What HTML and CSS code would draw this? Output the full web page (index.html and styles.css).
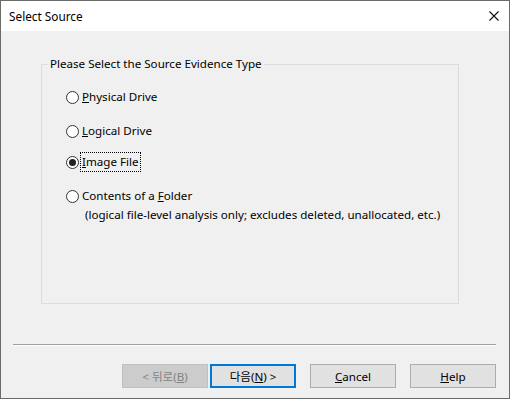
FILE: index.html
```html
<!DOCTYPE html>
<html>
<head>
<meta charset="utf-8">
<link rel="stylesheet" href="styles.css">
</head>
<body>
<div class="window">
  <div class="titlebar">
    <span class="title">Select Source</span>
    <svg class="close" width="10" height="10" viewBox="0 0 10 10"><path d="M0.5 0.5L9.5 9.5M9.5 0.5L0.5 9.5" stroke="#111" stroke-width="1.1" fill="none"/></svg>
  </div>
  <div class="content">
    <fieldset class="group">
      <legend class="legend">Please Select the Source Evidence Type</legend>
      <div class="opt opt-physical"><span class="radio"></span><span class="label"><u>P</u>hysical Drive</span></div>
      <div class="opt opt-logical"><span class="radio"></span><span class="label"><u>L</u>ogical Drive</span></div>
      <div class="opt opt-image"><span class="radio checked"></span><span class="label focus"><u>I</u>mage File</span></div>
      <div class="opt opt-folder"><span class="radio"></span><span class="label">Contents of a <u>F</u>older</span></div>
      <div class="note">(logical file-level analysis only; excludes deleted, unallocated, etc.)</div>
    </fieldset>
    <div class="separator"></div>
    <div class="buttons">
      <div class="btn disabled">&lt; 뒤로(<u>B</u>)</div>
      <div class="btn default">다음(<u>N</u>) &gt;</div>
      <div class="btn spaced"><u>C</u>ancel</div>
      <div class="btn spaced"><u>H</u>elp</div>
    </div>
  </div>
</div>
</body>
</html>
```
FILE: styles.css
```css
html, body {
  margin: 0;
  padding: 0;
  background: #f0f0f0;
}
body {
  font-family: "Noto Sans", "Noto Sans CJK KR", sans-serif;
  font-size: 11.6px;
  color: #000;
}
.window {
  width: 510px;
  height: 399px;
  box-sizing: border-box;
  border: 1px solid #6b6b6b;
  background: #f0f0f0;
  display: flex;
  flex-direction: column;
}
.titlebar {
  height: 30px;
  background: #fff;
  display: flex;
  align-items: center;
  padding-left: 8px;
  padding-right: 10px;
  flex: none;
}
.title {
  font-size: 11.8px;
  flex: 1;
  line-height: 30px;
}
.close {
  display: block;
}
.content {
  flex: 1;
  display: flex;
  flex-direction: column;
  padding: 0 13px 0 12px;
}
.group {
  margin: 25px 37px 0 28px;
  padding: 0 0 0 24px;
  height: 248px;
  box-sizing: border-box;
  border: 1px solid #dcdcdc;
  min-width: 0;
}
.legend {
  padding: 0 2px;
  margin-left: -18px;
  line-height: 16px;
}
.opt {
  display: flex;
  align-items: center;
  height: 20px;
}
.opt-physical { margin-top: 15px; }
.opt-logical { margin-top: 14px; }
.opt-image { margin-top: 11px; }
.opt-folder { margin-top: 14px; }
.radio {
  width: 11px;
  height: 11px;
  border: 1px solid #333;
  border-radius: 50%;
  background: #fff;
  box-sizing: content-box;
  position: relative;
  flex: none;
  margin-right: 1px;
}
.radio.checked::after {
  content: "";
  position: absolute;
  left: 2px;
  top: 2px;
  width: 7px;
  height: 7px;
  border-radius: 50%;
  background: #222;
}
.label {
  padding: 0 1px;
  line-height: 18px;
  border: 1px dotted transparent;
}
.label.focus {
  border-color: #000;
}
.note {
  margin-left: 19px;
  line-height: 18px;
  margin-top: 0;
}
.separator {
  margin-top: 40px;
  height: 1px;
  background: #a0a0a0;
  border-bottom: 1px solid #fff;
}
.buttons {
  display: flex;
  justify-content: flex-end;
  margin-top: 18px;
}
.btn {
  width: 86px;
  height: 24px;
  box-sizing: border-box;
  border: 1px solid #adadad;
  background: #e1e1e1;
  display: flex;
  align-items: center;
  justify-content: center;
  margin-left: 2px;
}
.btn.spaced {
  margin-left: 14px;
}
.btn.disabled {
  background: #cccccc;
  border-color: #bfbfbf;
  color: #838383;
}
.btn.default {
  border: 2px solid #0078d7;
}
```
